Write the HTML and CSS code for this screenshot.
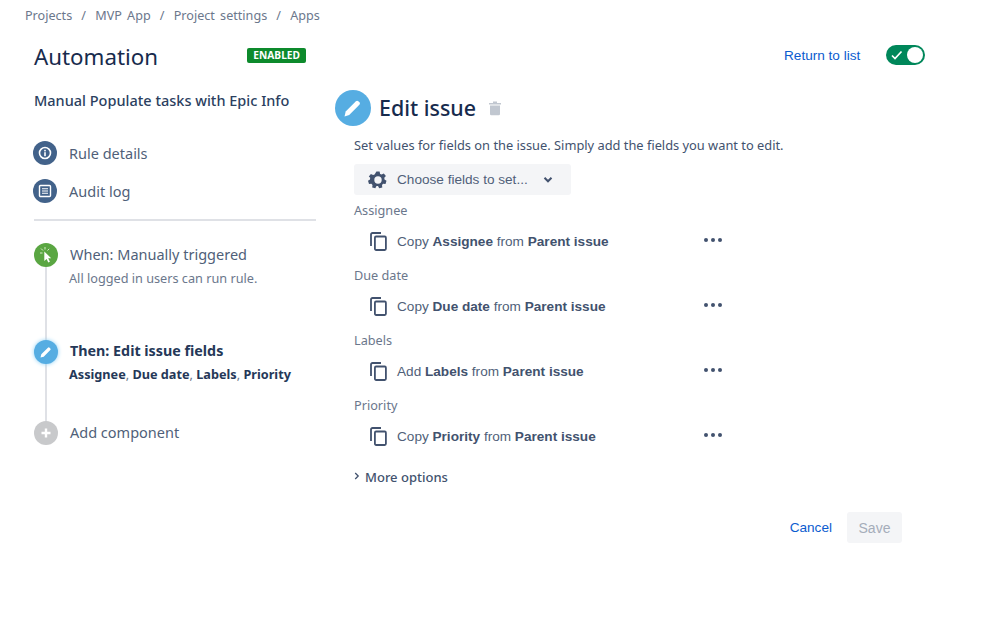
FILE: index.html
```html
<!DOCTYPE html>
<html lang="en">
<head>
<meta charset="utf-8">
<title>Automation</title>
<link rel="stylesheet" href="styles.css">
</head>
<body>
<nav class="crumbs"><span>Projects</span><i>/</i><span>MVP App</span><i>/</i><span>Project settings</span><i>/</i><span>Apps</span></nav>
<div class="columns">
  <aside class="side">
    <div class="side-head"><h1>Automation</h1><span class="badge">ENABLED</span></div>
    <h2 class="rule-name">Manual Populate tasks with Epic Info</h2>
    <div class="menu">
      <div class="menu-item"><span class="dot navy"><svg width="14" height="14" viewBox="0 0 14 14"><circle cx="7" cy="7" r="5.5" fill="none" stroke="#fff" stroke-width="1.6"/><rect x="6.2" y="6.2" width="1.6" height="4" fill="#fff"/><rect x="6.2" y="3.8" width="1.6" height="1.6" fill="#fff"/></svg></span><span>Rule details</span></div>
      <div class="menu-item"><span class="dot navy"><svg width="14" height="14" viewBox="0 0 14 14"><rect x="1.5" y="1.5" width="11" height="11" rx="1" fill="none" stroke="#fff" stroke-width="1.4"/><path d="M4 4.8h6M4 7h6M4 9.2h6" stroke="#fff" stroke-width="1.1"/></svg></span><span>Audit log</span></div>
    </div>
    <div class="timeline">
      <div class="step step-when">
        <span class="dot green"><svg width="20" height="20" viewBox="0 0 20 20"><path d="M8.3 6.5v9.6l2.3-2.2 1.7 3.6 1.6-.8-1.7-3.5h3z" fill="#fff"/><path d="M6.5 8H4M7 5.5 5 3.5M9 4.5V2M11.5 5.5l1.7-1.7" stroke="#d8ecc8" stroke-width="1" fill="none"/></svg></span>
        <div class="step-text"><div class="step-title">When: Manually triggered</div><div class="step-sub">All logged in users can run rule.</div></div>
      </div>
      <div class="step step-then">
        <span class="dot blue glow"><svg width="14" height="14" viewBox="0 0 14 14"><path d="M1.5 12.5l.8-3.2 6.6-6.6a1.2 1.2 0 0 1 1.7 0l.7.7a1.2 1.2 0 0 1 0 1.7l-6.6 6.6z" fill="#fff"/></svg></span>
        <div class="step-text"><div class="step-title strong">Then: Edit issue fields</div><div class="step-fields"><b>Assignee</b>, <b>Due date</b>, <b>Labels</b>, <b>Priority</b></div></div>
      </div>
      <div class="step step-add">
        <span class="dot grey"><svg width="12" height="12" viewBox="0 0 12 12"><path d="M6 1.5v9M1.5 6h9" stroke="#fff" stroke-width="2.4"/></svg></span>
        <div class="step-text"><div class="step-title">Add component</div></div>
      </div>
    </div>
  </aside>
  <main class="main">
    <div class="top-actions">
      <a class="link">Return to list</a>
      <span class="toggle"><svg width="12" height="10" viewBox="0 0 12 10"><path d="M1 5.500l3 3 6.500-7" fill="none" stroke="#fff" stroke-width="1.700"/></svg><span class="knob"></span></span>
    </div>
    <div class="edit-head">
      <span class="edit-icon"><svg width="20" height="20" viewBox="0 0 20 20"><path d="M1.5 18.5l1.2-5 10.2-10.2a1.8 1.8 0 0 1 2.5 0l1 1a1.8 1.8 0 0 1 0 2.5L6.2 17z" fill="#fff"/></svg></span>
      <h2>Edit issue</h2>
      <svg class="trash" width="14" height="16" viewBox="0 0 14 16"><path d="M5 1.5h4v1.5h4v1.6H1V3h4z" fill="#c1c7d0"/><path d="M2 5.6h10v8.4a1.3 1.3 0 0 1-1.3 1.3H3.3A1.3 1.3 0 0 1 2 14z" fill="#c1c7d0"/></svg>
    </div>
    <div class="form">
      <p class="intro">Set values for fields on the issue. Simply add the fields you want to edit.</p>
      <button class="choose"><svg width="20" height="20" viewBox="0 0 20 20"><path d="M8.4 1.5h3.2l.5 2.4 1.5.7 2.2-1.2 2.1 2.6-1.6 1.8.2 1.7 2 1.3-1 3.1-2.4-.2-1.1 1.3.3 2.4-3.1.8-1.2-2.1H8.500l-1.200 2.100-3.100-.8.300-2.400-1.100-1.300-2.400.2-1-3.100 2-1.300.2-1.700L.800 6.500l2.100-2.600 2.200 1.200 1.500-.7z" fill="#42526e"/><circle cx="10" cy="10" r="3.700" fill="#f4f5f7"/></svg><span>Choose fields to set...</span><svg class="chev" width="10" height="8" viewBox="0 0 10 8"><path d="M1.500 1.800 5 5.300l3.500-3.500" fill="none" stroke="#42526e" stroke-width="2"/></svg></button>
      <div class="field"><label>Assignee</label><div class="action"><svg class="copy" width="17" height="19" viewBox="0 0 17 19"><path d="M1 14V2.500A1.500 1.500 0 0 1 2.500 1H11" fill="none" stroke="#42526e" stroke-width="1.800"/><rect x="4.900" y="4.500" width="11" height="13.500" rx="1.200" fill="none" stroke="#42526e" stroke-width="1.800"/></svg><span class="txt">Copy <b>Assignee</b> from <b>Parent issue</b></span><span class="more"><i></i><i></i><i></i></span></div></div>
      <div class="field"><label>Due date</label><div class="action"><svg class="copy" width="17" height="19" viewBox="0 0 17 19"><path d="M1 14V2.500A1.500 1.500 0 0 1 2.500 1H11" fill="none" stroke="#42526e" stroke-width="1.800"/><rect x="4.900" y="4.500" width="11" height="13.500" rx="1.200" fill="none" stroke="#42526e" stroke-width="1.800"/></svg><span class="txt">Copy <b>Due date</b> from <b>Parent issue</b></span><span class="more"><i></i><i></i><i></i></span></div></div>
      <div class="field"><label>Labels</label><div class="action"><svg class="copy" width="17" height="19" viewBox="0 0 17 19"><path d="M1 14V2.500A1.500 1.500 0 0 1 2.500 1H11" fill="none" stroke="#42526e" stroke-width="1.800"/><rect x="4.900" y="4.500" width="11" height="13.500" rx="1.200" fill="none" stroke="#42526e" stroke-width="1.800"/></svg><span class="txt">Add <b>Labels</b> from <b>Parent issue</b></span><span class="more"><i></i><i></i><i></i></span></div></div>
      <div class="field"><label>Priority</label><div class="action"><svg class="copy" width="17" height="19" viewBox="0 0 17 19"><path d="M1 14V2.500A1.500 1.500 0 0 1 2.500 1H11" fill="none" stroke="#42526e" stroke-width="1.800"/><rect x="4.900" y="4.500" width="11" height="13.500" rx="1.200" fill="none" stroke="#42526e" stroke-width="1.800"/></svg><span class="txt">Copy <b>Priority</b> from <b>Parent issue</b></span><span class="more"><i></i><i></i><i></i></span></div></div>
      <div class="more-options"><svg width="6" height="8" viewBox="0 0 6 8"><path d="M1.200 1 4.200 4l-3 3" fill="none" stroke="#42526e" stroke-width="1.300"/></svg><span>More options</span></div>
      <div class="footer"><a class="link">Cancel</a><span class="save">Save</span></div>
    </div>
  </main>
</div>
</body>
</html>
```
FILE: styles.css
```css
* { box-sizing: border-box; }
html, body { margin: 0; padding: 0; }
body { width: 999px; height: 639px; overflow: hidden; background: #fff; font-family: "Noto Sans", sans-serif; color: #172b4d; }
.crumbs { display: flex; gap: 9.200px; padding: 7px 0 0 25px; height: 24px; font-size: 12.600px; word-spacing: 2px; line-height: 17px; color: #6b778c; }
.crumbs i { font-style: normal; }
.columns { display: flex; }
.side { width: 301px; margin-left: 33px; flex: none; }
.side-head { display: flex; justify-content: space-between; align-items: center; width: 272px; height: 44px; margin: 11px 0 0 1px; }
.side-head h1 { margin: 0; font-size: 22.300px; font-weight: 400; line-height: 28px; color: #172b4d; }
.badge { background: #0d8a2c; color: #fff; font-size: 10.200px; font-weight: 700; line-height: 15px; height: 15px; padding: 0 6px; border-radius: 2px; margin-top: -4px; }
.rule-name { margin: 10px 0 0 1px; font-size: 14.500px; font-weight: 500; line-height: 22px; color: #2c3f5f; }
.menu { margin-top: 30px; width: 283px; display: flex; flex-direction: column; gap: 14px; }
.menu::after { content: ""; height: 2px; margin: 2px 0 0 1px; background: #dfe1e6; }
.menu-item { display: flex; align-items: center; gap: 12px; height: 24px; font-size: 14.500px; color: #505f79; }
.dot { width: 24px; height: 24px; border-radius: 50%; display: flex; align-items: center; justify-content: center; flex: none; position: relative; z-index: 1; }
.navy { background: #42628a; }
.green { background: #5aa642; }
.blue { background: #56ade2; }
.glow { box-shadow: 0 0 4px #8cd0f5; }
.grey { background: #c8c9cb; }
.timeline { position: relative; margin: 22px 0 0 1px; }
.timeline::before { content: ""; position: absolute; left: 11px; top: 20px; width: 2px; height: 165px; background: #dfe1e6; }
.step { display: flex; gap: 11px; }
.step-when { height: 97px; }
.step-then { height: 81px; }
.step-text { position: relative; }
.step-title { font-size: 14.500px; line-height: 22px; color: #505f79; margin-left: 1px; }
.step-title.strong { font-weight: 700; color: #253858; font-size: 14.300px; }
.step-sub { font-size: 12.700px; line-height: 18px; color: #6b778c; margin-top: 4px; }
.step-fields { font-size: 12.700px; line-height: 18px; color: #6b778c; margin-top: 3px; }
.step-fields b { color: #253858; }
.main { flex: 1; position: relative; }
.top-actions { position: absolute; left: 450px; top: 21px; display: flex; align-items: center; gap: 26px; height: 20px; }
.link { font-family: "Liberation Sans", sans-serif; font-size: 13.600px; color: #0b5ccf; }
.toggle { display: flex; align-items: center; justify-content: space-between; width: 39px; height: 20px; border-radius: 10px; background: #00875a; padding: 0 2px 0 5px; }
.knob { width: 16px; height: 16px; border-radius: 50%; background: #fff; }
.edit-head { display: flex; align-items: center; height: 36px; margin-top: 66px; margin-left: 1px; }
.edit-icon { width: 36px; height: 36px; border-radius: 50%; background: #56ade2; display: flex; align-items: center; justify-content: center; }
.edit-head h2 { margin: 0 0 0 8px; font-size: 21.400px; font-weight: 500; line-height: 30px; color: #172b4d; }
.trash { margin-left: 12px; }
.form { margin-left: 20px; width: 548px; }
.intro { margin: 10px 0 0; font-size: 12.830px; line-height: 18px; color: #42526e; }
.choose { display: flex; align-items: center; width: 217px; height: 31px; margin-top: 10px; padding: 0 0 0 14px; border: 0; border-radius: 3px; background: #f4f5f7; font-family: "Liberation Sans", sans-serif; font-size: 13.600px; color: #505f79; }
.choose span { margin-left: 9px; }
.chev { margin-left: 15px; }
.field label { display: block; font-size: 12.700px; line-height: 18px; color: #6b778c; margin: 6px 0 1px; }
.action { display: flex; align-items: center; height: 40px; padding: 2px 0 0 16px; font-family: "Liberation Sans", sans-serif; font-size: 13.600px; color: #505f79; }
.action b { color: #42526e; }
.txt { margin-left: 10px; width: 307px; }
.more { display: flex; gap: 3px; margin-top: -2px; }
.more i { width: 4px; height: 4px; border-radius: 50%; background: #42526e; }
.more-options { display: flex; align-items: center; gap: 5px; font-size: 13px; font-weight: 500; line-height: 20px; color: #42526e; margin-top: 12px; }
.more-options svg { margin-top: -3px; }
.footer { display: flex; justify-content: flex-end; align-items: center; gap: 15px; margin-top: 25px; }
.save { display: flex; align-items: center; justify-content: center; width: 55px; height: 31px; border-radius: 3px; background: #f4f5f7; font-family: "Liberation Sans", sans-serif; font-size: 14px; color: #a5adba; }
```
